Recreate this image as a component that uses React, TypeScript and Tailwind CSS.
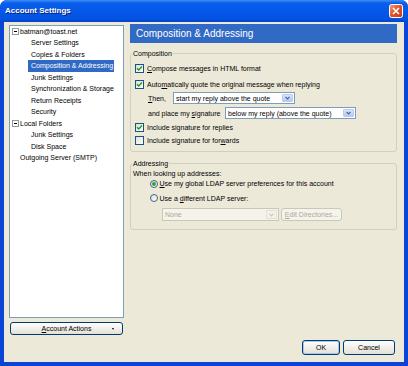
import React from "react";

type Node = { t: string; lvl: 0 | 1; box?: boolean; sel?: boolean };

const TREE: Node[] = [
  { t: "batman@toast.net", lvl: 0, box: true },
  { t: "Server Settings", lvl: 1 },
  { t: "Copies & Folders", lvl: 1 },
  { t: "Composition & Addressing", lvl: 1, sel: true },
  { t: "Junk Settings", lvl: 1 },
  { t: "Synchronization & Storage", lvl: 1 },
  { t: "Return Receipts", lvl: 1 },
  { t: "Security", lvl: 1 },
  { t: "Local Folders", lvl: 0, box: true },
  { t: "Junk Settings", lvl: 1 },
  { t: "Disk Space", lvl: 1 },
  { t: "Outgoing Server (SMTP)", lvl: 0 },
];

function Check({ on }: { on?: boolean }) {
  return (
    <span className="w-[9px] h-[9px] shrink-0 border border-[#1C5180] bg-[linear-gradient(135deg,#DCDCD7,#FFFFFF)] flex items-center justify-center">
      {on && (
        <svg width="7" height="7" viewBox="0 0 7 7">
          <path d="M1 3.3 L2.7 5 L6 1.5" stroke="#21A121" strokeWidth="1.5" fill="none" />
        </svg>
      )}
    </span>
  );
}

function Radio({ on }: { on?: boolean }) {
  return (
    <span className="w-[8px] h-[8px] shrink-0 rounded-full border border-[#3D6491] bg-[linear-gradient(135deg,#DCDCD7,#FFFFFF)] flex items-center justify-center">
      {on && <span className="w-[4px] h-[4px] rounded-full bg-[#2FA52F]" />}
    </span>
  );
}

function Arrow({ color }: { color: string }) {
  return (
    <svg width="5" height="4" viewBox="0 0 5 4">
      <path d="M0.5 0.8 L2.5 2.8 L4.5 0.8" stroke={color} strokeWidth="1.2" fill="none" />
    </svg>
  );
}

function Combo({ text, className, disabled }: { text: string; className: string; disabled?: boolean }) {
  return (
    <div
      className={`${className} flex items-stretch border ${
        disabled ? "border-[#C9C7BA] bg-[#F5F4EA] text-[#ACA899]" : "border-[#7F9DB9] bg-white text-black"
      }`}
    >
      <span className="flex-1 flex items-center pl-[2px] whitespace-nowrap overflow-hidden">{text}</span>
      <span
        className={`w-[11px] m-[1px] rounded-[1px] border flex items-center justify-center ${
          disabled
            ? "border-[#E2E0D6] bg-[#F2F1EA]"
            : "border-[#B9CBF3] bg-[linear-gradient(to_bottom,#DCE6FD,#B4C8F5)]"
        }`}
      >
        <Arrow color={disabled ? "#C9C7BA" : "#4D6185"} />
      </span>
    </div>
  );
}

function CloseIcon() {
  return (
    <svg width="14" height="14" viewBox="0 0 14 14" className="ml-auto shrink-0">
      <defs>
        <linearGradient id="cg" x1="0" y1="0" x2="1" y2="1">
          <stop offset="0" stopColor="#F2A07C" />
          <stop offset="0.45" stopColor="#E2582C" />
          <stop offset="1" stopColor="#C23812" />
        </linearGradient>
      </defs>
      <rect x="0.5" y="0.5" width="13" height="13" rx="2" fill="url(#cg)" stroke="#FFFFFF" />
      <path d="M4 4 L10 10 M10 4 L4 10" stroke="#FFFFFF" strokeWidth="1.6" />
    </svg>
  );
}

export default function App() {
  return (
    <div className="w-[408px] h-[366px] flex flex-col bg-[#0A45D8] rounded-t-[7px] overflow-hidden font-['Liberation_Sans',Arial,sans-serif]">
      {/* Titelleiste */}
      <div className="h-[22px] shrink-0 flex items-center pl-[5px] pr-[5px] bg-[linear-gradient(to_bottom,#3D8EF6_0%,#0A5EEB_14%,#0558E8_50%,#0453E2_85%,#0443C8_100%)]">
        <span className="text-white font-bold text-[8px] [text-shadow:1px_1px_0_#0A1E6E]">Account Settings</span>
        <CloseIcon />
      </div>

      <div className="flex-1 mx-[4px] mb-[4px] bg-[#ECE9D8] flex flex-col text-[7px] leading-[9px] text-black">
        <div className="flex pt-[2px]">
          {/* Baum links */}
          <div className="ml-[5px] mt-[0.5px] w-[115px] flex flex-col">
            <div className="h-[293px] bg-white border border-[#7F9DB9]">
              {TREE.map((n, i) => (
                <div key={i} className={`h-[11.5px] flex items-center ${n.lvl === 1 ? "pl-[18px]" : n.box ? "pl-[2px]" : "pl-[10px]"}`}>
                  {n.box && (
                    <span className="w-[7px] h-[7px] mr-[1px] border border-[#919B9C] bg-white flex items-center justify-center">
                      <span className="w-[3px] h-px bg-black" />
                    </span>
                  )}
                  <span className={`h-full flex items-center whitespace-nowrap ${n.sel ? "bg-[#316AC5] text-white pl-[3px] pr-[1px]" : n.lvl === 1 ? "pl-[3px]" : ""}`}>
                    {n.t}
                  </span>
                </div>
              ))}
            </div>
            <button className="mt-[4px] ml-[1px] w-[113px] h-[13px] rounded-[3px] border border-[#003C74] bg-[linear-gradient(to_bottom,#FFFFFF,#E3E0D6)] flex items-center relative">
              <span className="flex-1 text-center">
                <span className="underline">A</span>ccount Actions
              </span>
              <span className="absolute right-[8px] top-[5px] border-x-[1.5px] border-x-transparent border-t-[2px] border-t-black" />
            </button>
          </div>

          {/* Rechter Bereich */}
          <div className="ml-[6px] w-[267px] flex flex-col">
            <div className="h-[19px] bg-[#316AC5] text-white text-[10px] flex items-center pl-[6px]">Composition &amp; Addressing</div>

            <fieldset className="mt-[5.5px] border border-[#D0D0BF] rounded-[3px] pt-[2.5px] pb-[3px]">
              <legend className="ml-[1px] px-[1px]">Composition</legend>
              <div className="h-[16px] flex items-center pl-[4px] gap-[3px]">
                <Check on />
                <span><span className="underline">C</span>ompose messages in HTML format</span>
              </div>
              <div className="h-[16px] flex items-center pl-[4px] gap-[3px]">
                <Check on />
                <span>Auto<span className="underline">m</span>atically quote the original message when replying</span>
              </div>
              <div className="h-[12px] flex items-center pl-[17px]">
                <span className="w-[25px]"><span className="underline">T</span>hen,</span>
                <Combo text="start my reply above the quote" className="w-[122px] h-[12px]" />
              </div>
              <div className="h-[18px] flex items-center pl-[17px]">
                <span className="w-[77px]">and place my <span className="underline">s</span>ignature</span>
                <Combo text="below my reply (above the quote)" className="w-[131px] h-[12px]" />
              </div>
              <div className="h-[10px] flex items-center pl-[4px] gap-[3px]">
                <Check on />
                <span>Include si<span className="underline">g</span>nature for replies</span>
              </div>
              <div className="h-[16px] flex items-center pl-[4px] gap-[3px]">
                <Check />
                <span>Include signature for for<span className="underline">w</span>ards</span>
              </div>
            </fieldset>

            <fieldset className="mt-[6.5px] border border-[#D0D0BF] rounded-[3px] pb-[8px]">
              <legend className="ml-[1px] px-[1px]">Addressing</legend>
              <div className="h-[11px] flex items-center pl-[2px]">When looking up addresses:</div>
              <div className="h-[10px] flex items-center pl-[19px] gap-[1.5px]">
                <Radio on />
                <span><span className="underline">U</span>se my global LDAP server preferences for this account</span>
              </div>
              <div className="h-[19px] flex items-center pl-[19px] gap-[1.5px]">
                <Radio />
                <span>Use a <span className="underline">d</span>ifferent LDAP server:</span>
              </div>
              <div className="mt-[0.5px] flex items-center pl-[31px] gap-[2px]">
                <Combo text="None" className="w-[117px] h-[13px]" disabled />
                <span className="w-[61px] h-[13px] rounded-[3px] border border-[#C9C7BA] bg-[#F5F4EA] text-[#ACA899] flex items-center justify-center">
                  <span><span className="underline">E</span>dit Directories...</span>
                </span>
              </div>
            </fieldset>
          </div>
        </div>

        {/* Knöpfe unten */}
        <div className="mt-auto mb-[7px] mr-[9px] flex justify-end gap-[3px]">
          <button className="w-[38px] h-[15px] rounded-[3px] border border-[#003C74] bg-[linear-gradient(to_bottom,#FFFFFF,#E3E0D6)] shadow-[inset_0_0_0_1px_#A9C4EE]">OK</button>
          <button className="w-[52px] h-[15px] rounded-[3px] border border-[#003C74] bg-[linear-gradient(to_bottom,#FFFFFF,#E3E0D6)]">Cancel</button>
        </div>
      </div>
    </div>
  );
}
